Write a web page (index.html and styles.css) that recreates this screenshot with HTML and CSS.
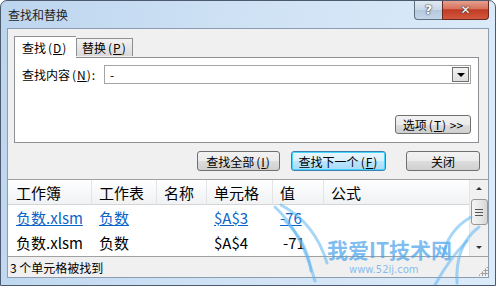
FILE: index.html
```html
<!DOCTYPE html>
<html lang="zh-CN">
<head>
<meta charset="UTF-8" />
<title>查找和替换</title>
<link rel="stylesheet" href="styles.css">
</head>
<body>
  <div class="window">
    <div class="titlebar">
      <span class="title">查找和替换</span>
      <div class="caption-buttons">
        <span class="cap-btn help">?</span>
        <span class="cap-btn close">✕</span>
      </div>
    </div>

    <div class="client">
      <div class="tabs">
        <span class="tab active">查找<span class="key">(<u>D</u>)</span></span>
        <span class="tab">替换<span class="key">(<u>P</u>)</span></span>
      </div>

      <div class="panel">
        <div class="find-row">
          <label class="find-label">查找内容<span class="key">(<u>N</u>)</span>:</label>
          <div class="combo">
            <span class="combo-text">-</span>
            <span class="combo-arrow"></span>
          </div>
        </div>
        <div class="options-row">
          <button class="btn options">选项<span class="key">(<u>T</u>)</span>&nbsp;&gt;&gt;</button>
        </div>
      </div>

      <div class="actions">
        <button class="btn find-all">查找全部<span class="key">(<u>I</u>)</span></button>
        <button class="btn find-next">查找下一个<span class="key">(<u>F</u>)</span></button>
        <button class="btn close-btn">关闭</button>
      </div>

      <div class="results">
        <div class="grid">
          <div class="head">工作簿</div>
          <div class="head">工作表</div>
          <div class="head">名称</div>
          <div class="head">单元格</div>
          <div class="head">值</div>
          <div class="head last">公式</div>

          <div class="cell"><a>负数.xlsm</a></div>
          <div class="cell"><a>负数</a></div>
          <div class="cell"></div>
          <div class="cell"><a>$A$3</a></div>
          <div class="cell"><a>-76</a></div>
          <div class="cell"></div>

          <div class="cell">负数.xlsm</div>
          <div class="cell">负数</div>
          <div class="cell"></div>
          <div class="cell">$A$4</div>
          <div class="cell value">-71</div>
          <div class="cell"></div>
        </div>
        <div class="scrollbar">
          <span class="sb-arrow up"></span>
          <span class="sb-thumb"><i></i><i></i><i></i></span>
          <span class="sb-arrow down"></span>
        </div>
      </div>

      <div class="status">
        <span>3 个单元格被找到</span>
        <span class="grip"></span>
      </div>
    </div>

    <div class="watermark">
      <svg class="wings" width="220" height="90" viewBox="0 0 220 90">
        <path d="M4 6 Q30 30 44 80" />
        <path d="M10 4 Q44 22 56 62" />
        <path d="M14 20 Q36 40 40 70" />
        <path d="M200 16 Q176 30 172 56" />
        <path d="M208 26 Q184 44 186 82" />
        <path d="M196 40 Q178 58 164 84" />
      </svg>
      <div class="wm-title">我爱IT技术网</div>
      <div class="wm-url">www.52ij.com</div>
    </div>
  </div>
</body>
</html>
```

FILE: styles.css
```css
* {
  box-sizing: border-box;
}

body {
  margin: 0;
  background: #fff;
  font-family: "Noto Sans CJK SC", "Noto Sans", sans-serif;
  font-size: 12px;
  color: #000;
}

/* Window frame */
.window {
  position: relative;
  width: 496px;
  height: 286px;
  border: 1px solid #4b5a6c;
  border-radius: 7px 7px 0 0;
  background: linear-gradient(100deg, #bcd5ee 0%, #cfe2f5 45%, #dcebf9 100%);
  padding: 0 6px 7px 6px;
  display: flex;
  flex-direction: column;
  overflow: hidden;
}

.titlebar {
  height: 27px;
  display: flex;
  align-items: flex-start;
}

.title {
  margin: 6px 0 0 1px;
  font-size: 12px;
  line-height: 15px;
  color: #1e1e1e;
}

.caption-buttons {
  margin-left: auto;
  margin-top: -1px;
  display: flex;
}

.cap-btn {
  height: 20px;
  display: flex;
  align-items: center;
  justify-content: center;
  color: #fff;
  font-family: "DejaVu Sans", sans-serif;
  font-weight: bold;
  border: 1px solid #5e6f84;
  border-top: none;
  text-shadow: 0 0 2px #333, 0 0 1px #222;
}

.help {
  width: 28px;
  font-size: 13px;
  border-radius: 0 0 0 4px;
  border-right: none;
  background: linear-gradient(#e3ebf4, #c9d8e8 50%, #b3c7dc 51%, #c4d6e8);
}

.close {
  width: 47px;
  font-size: 12px;
  border-color: #6b2a20;
  border-radius: 0 0 4px 0;
  background: linear-gradient(#e8a597, #d6745f 45%, #c13b23 52%, #d2573f);
}

/* access key "(X)" */
.key {
  margin-left: 2px;
  letter-spacing: 1px;
}

/* Client area */
.client {
  flex: 1;
  background: #f0f0f0;
  border: 1px solid #8c9db2;
  display: flex;
  flex-direction: column;
}

.tabs {
  display: flex;
  align-items: flex-end;
  margin: 7px 0 0 6px;
  position: relative;
  z-index: 1;
}

.tab {
  height: 18px;
  padding: 0 5px;
  border: 1px solid #8e8f94;
  border-bottom: none;
  background: linear-gradient(#f3f3f3, #e6e6e6 50%, #d9d9d9);
  display: flex;
  align-items: center;
  margin-bottom: 1px;
}

.tab.active {
  height: 22px;
  width: 62px;
  padding: 0 7px;
  background: #fff;
  border-right: none;
  margin-bottom: -1px;
}

.panel {
  margin: 0 9px 0 6px;
  height: 86px;
  border: 1px solid #8e8f94;
  background: #fff;
  padding: 7px 7px 8px 7px;
  display: flex;
  flex-direction: column;
  justify-content: space-between;
}

.find-row {
  display: flex;
  align-items: center;
}

.find-label {
  width: 82px;
}

.combo {
  flex: 1;
  height: 19px;
  border: 1px solid #a4a4a4;
  display: flex;
  align-items: center;
  padding-left: 5px;
}

.combo-text {
  flex: 1;
}

.combo-arrow {
  width: 17px;
  height: 15px;
  margin-right: 1px;
  border: 1px solid #6f6f6f;
  background: linear-gradient(#f2f2f2, #dedede);
  position: relative;
}

.combo-arrow::after {
  content: "";
  position: absolute;
  left: 4px;
  top: 5px;
  border-left: 4px solid transparent;
  border-right: 4px solid transparent;
  border-top: 4px solid #000;
}

.options-row {
  display: flex;
  justify-content: flex-end;
}

/* Buttons */
.btn {
  font-family: inherit;
  font-size: 12px;
  height: 20px;
  padding: 0;
  border: 1px solid #707070;
  border-radius: 3px;
  background: linear-gradient(#f2f2f2, #ebebeb 50%, #dddddd 51%, #cfcfcf);
  color: #000;
  display: flex;
  align-items: center;
  justify-content: center;
}

.options {
  width: 76px;
  height: 19px;
}

.actions {
  display: flex;
  justify-content: flex-end;
  gap: 11px;
  margin: 8px 8px 0 0;
}

.find-all {
  width: 83px;
}

.find-next {
  width: 95px;
  border-color: #3c7fb1;
  box-shadow: inset 0 0 0 1px #48d4ff;
  background: linear-gradient(#eaf6fd, #d9f0fc 50%, #bee6fd 51%, #a7d9f5);
}

.close-btn {
  width: 74px;
  margin-left: 9px;
}

/* Results list */
.results {
  margin-top: 8px;
  height: 78px;
  border-top: 1px solid #a0a0a0;
  border-bottom: 1px solid #a0a0a0;
  background: #fff;
  display: flex;
}

.grid {
  flex: 1;
  display: grid;
  grid-template-columns: 84px 65px 50px 66px 51px 1fr;
  grid-auto-rows: 25px;
  font-size: 15px;
}

.head {
  background: linear-gradient(#ffffff, #f7f8fa 50%, #f1f2f4);
  border-right: 1px solid #e3e4e6;
  border-bottom: 1px solid #d5d5d5;
  padding-left: 7px;
  display: flex;
  align-items: center;
  height: 25px;
}

.head:first-child {
  padding-left: 8px;
}

.head.last {
  border-right: none;
}

.cell {
  padding-left: 7px;
  display: flex;
  align-items: center;
}

.cell:nth-child(6n+1) {
  padding-left: 8px;
}

.cell a {
  color: #0a64c8;
  text-decoration: underline;
}

.cell.value {
  padding-left: 10px;
}

.scrollbar {
  width: 19px;
  background: #f1f1f1;
  border-left: 1px solid #e5e5e5;
  display: flex;
  flex-direction: column;
  align-items: center;
  padding: 0 1px;
}

.sb-arrow {
  width: 17px;
  height: 17px;
  position: relative;
}

.sb-arrow::after {
  content: "";
  position: absolute;
  left: 5px;
  border-left: 3px solid transparent;
  border-right: 3px solid transparent;
}

.sb-arrow.up::after {
  top: 7px;
  border-bottom: 3px solid #333;
}

.sb-arrow.down {
  margin-top: auto;
}

.sb-arrow.down::after {
  top: 7px;
  border-top: 3px solid #333;
}

.sb-thumb {
  width: 17px;
  height: 26px;
  margin-top: 2px;
  border: 1px solid #979797;
  border-radius: 3px;
  background: linear-gradient(90deg, #f4f4f4, #e8e8e8 50%, #d6d6d6);
  display: flex;
  flex-direction: column;
  align-items: center;
  justify-content: center;
  gap: 2px;
}

.sb-thumb i {
  width: 8px;
  height: 1px;
  background: #555;
}

/* Status bar */
.status {
  flex: 1;
  display: flex;
  align-items: center;
  padding-left: 2px;
  font-size: 12px;
}

.grip {
  margin-left: auto;
  width: 10px;
  height: 10px;
  align-self: flex-end;
  margin-bottom: 1px;
  background:
    radial-gradient(circle, #a0a0a0 1px, transparent 1.2px) 0 0 / 3px 3px;
  clip-path: polygon(100% 0, 100% 100%, 0 100%);
}

/* Watermark over the list */
.watermark {
  position: absolute;
  left: 270px;
  top: 200px;
  width: 220px;
  height: 86px;
  pointer-events: none;
}

.wings {
  position: absolute;
  left: 0;
  top: 0;
}

.wings path {
  fill: none;
  stroke: #5cb4f2;
  stroke-width: 3;
  stroke-linecap: round;
  opacity: 0.55;
}

.wm-title {
  position: absolute;
  left: 56px;
  top: 35px;
  font-size: 21px;
  line-height: 26px;
  font-weight: bold;
  color: rgba(70, 160, 235, 0.7);
  letter-spacing: 0;
}

.wm-url {
  position: absolute;
  left: 78px;
  top: 63px;
  font-family: "DejaVu Sans", sans-serif;
  font-size: 10px;
  color: rgba(80, 165, 235, 0.7);
}
```
